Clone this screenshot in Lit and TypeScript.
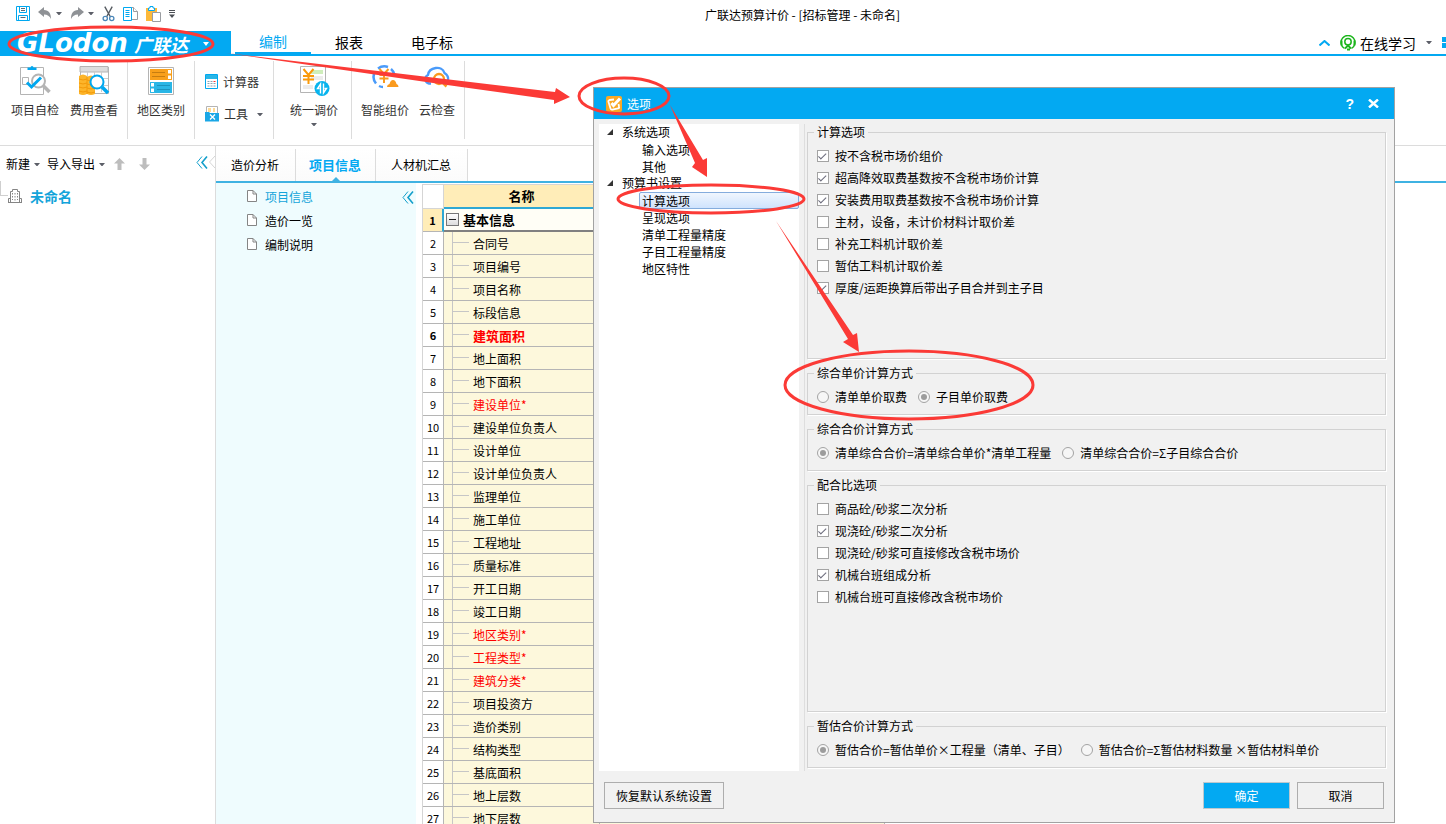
import { LitElement, html, css, svg, nothing } from "lit";
import { customElement, state } from "lit/decorators.js";
import { classMap } from "lit/directives/class-map.js";

const base = css`
  *, *::before, *::after { box-sizing: border-box; }
  button { font: inherit; color: inherit; background: none; border: 0; padding: 0; margin: 0; }
  svg { display: block; flex: none; }
`;

const caret = html`<svg width="6" height="3" viewBox="0 0 6 3"><path d="M0 0h6L3 3.500z" fill="#5c5f68"/></svg>`;

const icons = {
  save: html`<svg width="14" height="15" viewBox="0 0 14 15" fill="none" stroke="#00a8f0"><path d="M.5.5h13v14H.5z"/><path d="M3.500.5v6h7v-6M2.500 14.500v-5h9v5"/><path d="M5 2.500h4M5 4.500h4M4.500 11.500h5" stroke="#5b6a75"/></svg>`,
  undo: html`<svg width="14" height="14" viewBox="0 0 14 14"><path d="M0 5 6 0v3c5 0 7 3.500 7 9-1.500-3-3.500-4.500-7-4.500V10z" fill="#8f9296"/></svg>`,
  redo: html`<svg width="14" height="14" viewBox="0 0 14 14"><path d="M14 5 8 0v3C3 3 1 6.500 1 12c1.500-3 3.500-4.500 7-4.500V10z" fill="#8f9296"/></svg>`,
  cut: html`<svg width="13" height="16" viewBox="0 0 14 16" fill="none"><path d="M3 0l6 11M11 0 5 11" stroke="#555a60" stroke-width="1.500"/><circle cx="3.500" cy="12.800" r="2.300" stroke="#4a86b8" stroke-width="1.400"/><circle cx="10.500" cy="12.800" r="2.300" stroke="#4a86b8" stroke-width="1.400"/></svg>`,
  copy: html`<svg width="15" height="15" viewBox="0 0 15 15" fill="#fff"><path d="M5.500 1.500h5l4 4v8h-9z" stroke="#9a9da1"/><path d="M10.500 1.500v4h4" stroke="#9a9da1"/><path d="M.5 1.500h8v13h-8z" stroke="#00a8f0"/><path d="M2.500 4.500h4M2.500 6.500h4M2.500 8.500h4M2.500 10.500h4" stroke="#00a8f0"/></svg>`,
  paste: html`<svg width="15" height="16" viewBox="0 0 15 16"><path d="M0 2h11v13H0z" fill="#fdb93a"/><path d="M2.500 2h1.500V.5h3V2h1.500v2.500h-6z" fill="#fff" stroke="#00a8f0"/><path d="M6.500 6.500h8v9h-8z" fill="#fff" stroke="#9a9da1"/></svg>`,
  more: html`<svg width="6" height="8" viewBox="0 0 6 8"><path d="M0 0h6v1H0zM0 2h6v1H0zM0 4.500h6L3 8z" fill="#4b4f55"/></svg>`,
  check: html`<svg width="32" height="32" viewBox="0 0 32 32" fill="none"><path d="M1.500 2.500h23v27h-23z" stroke="#b4b4b4"/><path d="M8.500 5V2.500h3a1.500 1.500 0 0 1 3 0h3V5z" fill="#00a8f0"/><path d="M3.500 12.500h6v7h-6z" stroke="#b4b4b4"/><circle cx="19.500" cy="16" r="6.500" fill="#fff" stroke="#b4b4b4" stroke-width="2"/><path d="M8 17.500l4.500 4.500L22 12.500" stroke="#00a8f0" stroke-width="3"/><path d="M24 20.500l6.500 6.500" stroke="#b4b4b4" stroke-width="3.500"/></svg>`,
  fee: html`<svg width="32" height="32" viewBox="0 0 32 32" fill="none"><path d="M2.500 2v26M2.500 28.500h28V2" stroke="#b4b4b4"/><path d="M2 1.500h28V7H2z" fill="#ddd" stroke="#b4b4b4"/><path d="M9.500 7v20M16.500 7v20M23.500 7v20M3 13.500h27M3 20.500h27" stroke="#ccc"/><path d="M1 11q4-3 8 0v1q4-3 8 0v17q-4 2-8 0-4 2-8 0z" fill="#fdb52a"/><path d="M1 14q4 2 8 0M1 18q4 2 8 0M1 22q4 2 8 0M1 26q4 2 8 0M9 15q4 2 8 0M9 19q4 2 8 0M9 23q4 2 8 0M9 27q4 2 8 0M9 12v17" stroke="#f39a0a"/><circle cx="19" cy="17" r="6.500" fill="#fff" stroke="#00a8f0" stroke-width="2"/><path d="M24 22l6 6" stroke="#00a8f0" stroke-width="3.500"/></svg>`,
  region: html`<svg width="32" height="32" viewBox="0 0 32 32" fill="none"><path d="M3.500 2.500h25v27h-25z" stroke="#b4b4b4"/><path d="M5 4h22v11H5z" fill="#f9a01b"/><path d="M7 7.500h13M7 11.500h13" stroke="#c77d10"/><path d="M22.500 4.500h4v4.500h-4zM22.500 10h4v4.500h-4z" fill="#fff" stroke="#f9a01b"/><path d="M5 17h22v11H5z" fill="#29b6e6"/><path d="M12 20.500h13M12 24.500h13" stroke="#1a94c0"/><path d="M5.500 17.500h4v4.500h-4zM5.500 23h4v4.500h-4z" fill="#fff" stroke="#29b6e6"/></svg>`,
  calc: html`<svg width="13" height="16" viewBox="0 0 13 16"><path d="M.5.5h12v14H.5z" fill="#fff" stroke="#00a8f0"/><path d="M1 1h11v4H1z" fill="#29b6e6"/><path d="M2.500 7.500h2M5.500 7.500h2M2.500 9.500h2M5.500 9.500h2M2.500 12h2M5.500 12h2M8.500 12h2M8.500 9.500h2" stroke="#8aa5b5"/><path d="M8.500 7.500h2" stroke="#f33"/></svg>`,
  tools: html`<svg width="14" height="16" viewBox="0 0 14 16"><path d="M1.500.5h11v8h-11z" fill="#fff" stroke="#b4b4b4"/><path d="M3 3h3M3 5h3M8 3h2M8 5h2" stroke="#fdb52a"/><path d="M0 6h4l1 1h9v8.500H0z" fill="#1aa7e6"/><path d="M5 8.500l5 5M10 8.500l-5 5" stroke="#fff" stroke-width="1.300"/></svg>`,
  adjust: html`<svg width="32" height="32" viewBox="0 0 32 32" fill="none"><path d="M2.500 1.500h25v26h-25z" fill="#fff" stroke="#b4b4b4"/><path d="M13 5h12v4H13z" fill="#cfeebb"/><path d="M13 11h12v4H13zM5 20h10v4H5zM17 20h8v4h-8z" fill="#ececec"/><path d="M5.500 4l5 6 5-6M10.500 10v9M5 11h11M5 14.500h11" stroke="#fa9a0a" stroke-width="2"/><circle cx="24" cy="23.500" r="7.500" fill="#08b4ee"/><path d="M22.500 28.500V19l-3 4.500h2M25.500 18.500V28l3-4.500h-2" stroke="#fff" stroke-width="1.400"/></svg>`,
  smart: html`<svg width="32" height="32" viewBox="0 0 32 32" fill="none"><path d="M7 18.500A11 11 0 0 1 6 6.500M9 3.500a11 11 0 0 1 10-1.500M22 4q3 2.500 3.500 6M10 21q2 1 4 1" stroke="#4a9bfa" stroke-width="2.500"/><path d="M10.500 4l4.500 5 4.500-5M15 9v9M10.500 10h9M10.500 13.500h9" stroke="#fa9a1e" stroke-width="2"/><path d="M18 22q0-2.500 2.500-3Q21.500 15 24 15t3.500 4q2 .5 2 3z" fill="#fa9a1e"/></svg>`,
  cloud: html`<svg width="32" height="32" viewBox="0 0 32 32" fill="none"><path d="M10 18.500H8a4.500 4.500 0 0 1-1-8.500C8 2 21 0 23.500 8Q28 11 27 15.500" stroke="#4a9bfa" stroke-width="2.300"/><circle cx="18" cy="14" r="5" stroke="#fa9a1e" stroke-width="2.300"/><path d="M21.500 17.500l4 4" stroke="#fa9a1e" stroke-width="2.500"/></svg>`,
  headset: html`<svg width="16" height="16" viewBox="0 0 16 16" fill="none" stroke="#1cb51c"><path d="M4.500 13.500A7 7 0 1 1 11.500 13.500" stroke-width="1.400"/><path d="M1.500 5.500v5M14.500 5.500v5" stroke-width="2"/><circle cx="8" cy="6.800" r="3.200" stroke-width="1.500"/><path d="M5 13.500l3-3 3 3M7 14.500h3" stroke-width="1.800"/></svg>`,
  building: html`<svg width="14" height="14" viewBox="0 0 14 14" fill="none" stroke="#858585"><path d="M2.500 13V2.500h2v-2h5v2h2V13M0 13.500h14M.5 13V9.500h2M13.500 13V9.500h-2"/><path d="M4.500 4v7M7 4v9M9.500 4v7" stroke-dasharray="1.500 1.500"/></svg>`,
  page: html`<svg width="10" height="12" viewBox="0 0 10 12" fill="#fff" stroke="#858585"><path d="M.5.5H6L9.500 4v7.500h-9z"/><path d="M6 .5V4h3.500" fill="none"/></svg>`,
  collapse: html`<svg width="12" height="13" viewBox="0 0 12 13" fill="none" stroke="#139fcb"><path d="M6 .5l-5 6 5 6"/><path d="M11 .5l-5 6 5 6" stroke-width="1.600"/></svg>`,
  notch: html`<svg width="6" height="12" viewBox="0 0 6 12" fill="#fff" stroke="#d5d5d5"><path d="M6 0 .5 6 6 12"/></svg>`,
  up: html`<svg width="11" height="12" viewBox="0 0 11 12"><path d="M5.500 0 11 5.500H7.500V12h-4V5.500H0z" fill="#bdbdbd"/></svg>`,
  down: html`<svg width="11" height="12" viewBox="0 0 11 12"><path d="M5.500 12 11 6.500H7.500V0h-4v6.500H0z" fill="#bdbdbd"/></svg>`,
  edit: html`<svg width="16" height="16" viewBox="0 0 16 16" fill="none"><rect width="16" height="16" rx="2" fill="#f9a825"/><path d="M8 3.500L3.500 4Q2 4.500 2.500 6l2 6.500q.5 1.500 2 1l5.500-1q1.500-.5 1-2L12.500 8" stroke="#fff" stroke-width="1.800"/><path d="M5.500 7l2 2.500L14 2.500" stroke="#fff" stroke-width="3"/></svg>`,
};

@customElement("ribbon-bar")
class RibbonBar extends LitElement {
  static styles = [base, css`
    :host { display: block; }
    .ribbon { display: flex; height: 90px; padding: 5px 0 6px; border-bottom: 1px solid #dcdcdc; }
    .group { display: flex; gap: 10px; padding: 0 9px; border-right: 1px solid #dcdcdc; }
    .group.first { padding-left: 11px; gap: 11px; }
    .group.wide { padding: 0 13px 0 16px; }
    .tool { display: flex; flex-direction: column; align-items: center; justify-content: flex-start; padding-top: 4px; gap: 5px; line-height: 16px; color: #333; }
    .stack { display: flex; flex-direction: column; gap: 16px; padding: 13px 1px 0; }
    .small { display: flex; align-items: center; gap: 5px; line-height: 16px; color: #333; }
    .small svg:last-child:not(:first-child) { margin-left: 4px; }
  `];
  render() {
    return html`<div class="ribbon">
      <div class="group first">
        <button class="tool">${icons.check}<span>项目自检</span></button>
        <button class="tool">${icons.fee}<span>费用查看</span></button>
      </div>
      <div class="group"><button class="tool">${icons.region}<span>地区类别</span></button></div>
      <div class="group"><div class="stack">
        <button class="small">${icons.calc}<span>计算器</span></button>
        <button class="small">${icons.tools}<span>工具</span>${caret}</button>
      </div></div>
      <div class="group wide"><button class="tool">${icons.adjust}<span>统一调价</span>${caret}</button></div>
      <div class="group">
        <button class="tool">${icons.smart}<span>智能组价</span></button>
        <button class="tool">${icons.cloud}<span>云检查</span></button>
      </div>
    </div>`;
  }
}

type Row = [string, string?];
const rows: Row[] = [
  ["合同号"], ["项目编号"], ["项目名称"], ["标段信息"], ["建筑面积", "red bold"], ["地上面积"], ["地下面积"],
  ["建设单位*", "red"], ["建设单位负责人"], ["设计单位"], ["设计单位负责人"], ["监理单位"], ["施工单位"],
  ["工程地址"], ["质量标准"], ["开工日期"], ["竣工日期"], ["地区类别*", "red"], ["工程类型*", "red"],
  ["建筑分类*", "red"], ["项目投资方"], ["造价类别"], ["结构类型"], ["基底面积"], ["地上层数"], ["地下层数"],
];

@customElement("info-table")
class InfoTable extends LitElement {
  static styles = [base, css`
    :host { display: block; }
    table { border-collapse: separate; border-spacing: 0; table-layout: fixed; width: 463px; border-left: 1px solid #d5d5d5; margin-top: 1px; }
    .c-num { width: 21px; }
    .c-name { width: 156px; }
    th, td { padding: 0; height: 23px; line-height: 16px; border-bottom: 1px solid #b5b5b5; border-right: 1px solid #b5b5b5; text-align: left; }
    thead th { height: 25px; background: #ffedb8; border-top: 1px solid #d5d5d5; border-bottom: 2px solid #2fa8d4; text-align: center; font-size: 13px; }
    thead th:first-child { background: #fff; border-bottom: 1px solid #d5d5d5; border-right-color: #d5d5d5; }
    tbody th { font-weight: 400; text-align: center; font-size: 11px; background: #fff; }
    td { background: #fdf8dc; }
    .name { display: flex; align-items: stretch; height: 22px; padding-left: 8px; }
    .branch { width: 21px; border-left: 1px solid #c6c6c6; }
    .branch::before { content: ""; display: block; width: 16px; height: 11px; border-bottom: 1px solid #c6c6c6; }
    .label { line-height: 24px; }
    .red { color: #f00; }
    .bold { font-weight: 700; }
    .label.bold { font-size: 13px; }
    .root th { background: #ffedb8; font-weight: 700; border-right: 2px solid #2fa8d4; }
    .root td { background: #fffef6; border-bottom: 2px solid #808080; font-weight: 700; font-size: 13px; }
    .root .name { align-items: center; height: 21px; padding-left: 2px; gap: 4px; }
    .toggle { width: 13px; height: 13px; border: 1px solid #777; background: linear-gradient(#fff, #ddd); display: grid; place-items: center; }
    .toggle::before { content: ""; width: 7px; height: 1px; background: #222; }
  `];
  render() {
    return html`<table>
      <colgroup><col class="c-num"><col class="c-name"><col></colgroup>
      <thead><tr><th></th><th>名称</th><th></th></tr></thead>
      <tbody>
        <tr class="root"><th>1</th><td><div class="name"><button class="toggle" aria-label="折叠"></button><span>基本信息</span></div></td><td></td></tr>
        ${rows.map(([name, style], i) => html`<tr>
          <th class=${style?.includes("bold") ? "bold" : nothing}>${i + 2}</th>
          <td><div class="name"><span class="branch"></span><span class="label ${style ?? ""}">${name}</span></div></td><td></td>
        </tr>`)}
      </tbody>
    </table>`;
  }
}

type Choice = { label: string; on?: boolean };
type Section = { title: string; kind: "checkbox" | "radio"; size?: string; items: Choice[] };
const sections: Section[] = [
  { title: "计算选项", kind: "checkbox", size: "tall", items: [
    { label: "按不含税市场价组价", on: true }, { label: "超高降效取费基数按不含税市场价计算", on: true },
    { label: "安装费用取费基数按不含税市场价计算", on: true }, { label: "主材，设备，未计价材料计取价差" },
    { label: "补充工料机计取价差" }, { label: "暂估工料机计取价差" }, { label: "厚度/运距换算后带出子目合并到主子目", on: true } ] },
  { title: "综合单价计算方式", kind: "radio", items: [{ label: "清单单价取费" }, { label: "子目单价取费", on: true }] },
  { title: "综合合价计算方式", kind: "radio", items: [{ label: "清单综合合价=清单综合单价*清单工程量", on: true }, { label: "清单综合合价=Σ子目综合合价" }] },
  { title: "配合比选项", kind: "checkbox", size: "tall", items: [
    { label: "商品砼/砂浆二次分析" }, { label: "现浇砼/砂浆二次分析", on: true }, { label: "现浇砼/砂浆可直接修改含税市场价" },
    { label: "机械台班组成分析", on: true }, { label: "机械台班可直接修改含税市场价" } ] },
  { title: "暂估合价计算方式", kind: "radio", items: [{ label: "暂估合价=暂估单价×工程量（清单、子目）", on: true }, { label: "暂估合价=Σ暂估材料数量 ×暂估材料单价" }] },
];
const tree = [
  { title: "系统选项", items: ["输入选项", "其他"] },
  { title: "预算书设置", items: ["计算选项", "呈现选项", "清单工程量精度", "子目工程量精度", "地区特性"] },
];

@customElement("options-dialog")
class OptionsDialog extends LitElement {
  static styles = [base, css`
    :host { display: flex; flex-direction: column; background: #f1f1f1; border: 1px solid #a2a2a2; }
    header { display: flex; align-items: center; height: 31px; padding: 0 15px 0 12px; background: #03a9f2; color: #fff; }
    header h2 { margin: 0 0 0 5px; flex: 1; font-size: 12px; font-weight: 400; }
    .win { display: flex; align-items: center; gap: 14px; font: 700 14px "Liberation Sans", sans-serif; }
    .body { flex: 1; display: flex; min-height: 0; padding: 5px 8px 0 5px; }
    .tree { width: 200px; background: #fff; line-height: 16px; }
    .tree ul { list-style: none; margin: 0; padding: 0; }
    .parent { display: flex; align-items: center; gap: 9px; height: 17px; padding: 0 0 1px 8px; }
    .leaf { display: block; width: 160px; height: 17px; margin-left: 40px; padding-left: 2px; border: 1px solid transparent; line-height: 14px; text-align: left; }
    .leaf.on { border-color: #84acdd; border-radius: 2px; background: linear-gradient(#f0f6fe, #cfe3fd); }
    .form { flex: 1; display: flex; flex-direction: column; gap: 6px; margin-left: 5px; padding: 0 0 3px 2px; border-left: 1px solid #dedede; }
    fieldset { margin: 0; min-width: 0; height: 50px; padding: 5px 0 0 9px; border: 1px solid #d2d2d2; box-shadow: 1px 1px 0 #fff; line-height: 16px; }
    fieldset.tall { height: auto; flex: 1; }
    legend { padding: 0 3px; margin-left: -3px; }
    .choices { display: flex; flex-direction: column; align-items: flex-start; }
    .choices.radio { flex-direction: row; gap: 11px; }
    label { display: flex; align-items: center; gap: 6px; height: 22px; white-space: nowrap; }
    input { appearance: none; width: 12px; height: 12px; margin: 0; border: 1px solid #a3a3a3; background: #fff; flex: none; display: grid; place-items: center; }
    input[type="checkbox"]:checked::before { content: ""; width: 8px; height: 4px; border: solid #6b6b7b; border-width: 0 0 1px 1px; transform: rotate(-45deg) translate(0, -1px); }
    input[type="radio"] { border-radius: 50%; background: #f6f6f6; }
    input[type="radio"]:checked::before { content: ""; width: 6px; height: 6px; border-radius: 50%; background: #9c9c9c; }
    footer { display: flex; gap: 7px; padding: 11px 10px 13px; }
    footer button { width: 87px; height: 27px; border: 1px solid #adadad; }
    footer .reset { width: 120px; margin-right: auto; }
    footer .ok { background: #03a9f2; color: #fff; border-color: #bcc8ce; }
  `];
  @state() private current = "计算选项";
  render() {
    return html`
      <header>${icons.edit}<h2>选项</h2>
        <div class="win"><button>?</button>
        <button aria-label="关闭"><svg width="11" height="9" viewBox="0 0 11 9"><path d="M1 .5l9 8M10 .5l-9 8" stroke="#fff" stroke-width="2.400"/></svg></button></div>
      </header>
      <div class="body">
        <nav class="tree">${tree.map((g) => html`
          <div class="parent"><svg width="6" height="6" viewBox="0 0 6 6"><path d="M6 0v6H0z" fill="#333"/></svg><span>${g.title}</span></div>
          <ul>${g.items.map((t) => html`<li><button class=${classMap({ leaf: true, on: t === this.current })} @click=${() => (this.current = t)}>${t}</button></li>`)}</ul>`)}
        </nav>
        <form class="form">${sections.map((s, i) => html`
          <fieldset class=${s.size ?? nothing}><legend>${s.title}</legend>
            <div class="choices ${s.kind}">${s.items.map((c) => html`
              <label><input type=${s.kind} name="s${i}" .checked=${!!c.on} ?checked=${!!c.on}><span>${c.label}</span></label>`)}
            </div>
          </fieldset>`)}
        </form>
      </div>
      <footer><button class="reset">恢复默认系统设置</button><button class="ok">确定</button><button>取消</button></footer>`;
  }
}

const rings = [[111, 44, 102, 17], [624, 96, 45, 18], [711, 199, 93, 14], [909, 385, 124, 34]];
const arrows = [
  "M226 53 555 92 556 88 570 97 554 104 554 100 440 84z",
  "M670 105 703 160 707 158 707 177 692 167 695 163z",
  "M776 221 853 335 857 333 859 352 843 342 848 339z",
];

@customElement("app-root")
class AppRoot extends LitElement {
  static styles = [base, css`
    :host { display: flex; flex-direction: column; position: relative; height: 100vh; overflow: hidden; background: #fff; color: #000; font: 12px/16px "Noto Sans CJK SC", "Noto Sans", sans-serif; }
    .title { display: flex; align-items: center; height: 31px; padding: 0 0 4px 16px; }
    .quick { display: flex; align-items: center; gap: 8px; }
    .quick button { display: flex; align-items: center; gap: 4px; }
    .title h1 { flex: 1; margin: 2px 16px 0 0; text-align: center; font-size: 12px; font-weight: 400; }
    .menu { display: flex; height: 25px; }
    .brand { display: flex; align-items: center; width: 231px; padding-left: 17px; background: #03a9f2; color: #fff; font-style: italic; font-weight: 700; }
    .latin { width: 117px; font: italic 700 26px/25px "DejaVu Sans", sans-serif; }
    .cjk { font-size: 18px; line-height: 24px; }
    .brand svg { margin-left: 15px; }
    .tabs { flex: 1; display: flex; padding-left: 4px; border-bottom: 2px solid #03a9f2; font-size: 14px; min-width: 0; overflow: hidden; }
    .tab { padding: 0 24px; line-height: 21px; }
    .tab.on { color: #03a9f2; border-bottom: 2px solid #03a9f2; }
    .online { display: flex; align-items: center; gap: 10px; margin-left: auto; }
    .learn { display: flex; align-items: center; gap: 4px; }
    .work { flex: 1; display: flex; min-height: 0; }
    .side { width: 216px; border-right: 1px solid #dcdcdc; }
    .bar { display: flex; align-items: center; height: 36px; padding-left: 6px; gap: 7px; }
    .bar button { display: flex; align-items: center; gap: 4px; }
    .bar .arrows { display: flex; gap: 14px; margin-left: 2px; }
    .fold { display: flex; align-items: center; margin-left: auto; }
    .bar .fold { gap: 1px; height: 32px; align-self: flex-start; }
    .root { display: flex; align-items: center; gap: 8px; height: 27px; color: #14a4da; font-size: 14px; font-weight: 700; }
    .stem { width: 8px; height: 15px; margin: 0 -8px 14px 0; border: solid #cfcfcf; border-width: 0 0 1px 1px; }
    .main { flex: 1; display: flex; flex-direction: column; min-width: 0; }
    .views { display: flex; height: 37px; padding-top: 3px; border-bottom: 2px solid #3fb2e2; }
    .view { padding: 0 16px 0 15px; border-right: 1px solid #dcdcdc; background: linear-gradient(#fff, #fbfbfb); }
    .view.on { position: relative; padding: 0 14px 0 13px; color: #03a9f2; font-size: 13px; font-weight: 700; }
    .view.on::after { content: ""; position: absolute; left: 50%; bottom: 0; margin-left: -4px; border: 4px solid transparent; border-top: 0; border-bottom-color: #3fb2e2; }
    .content { flex: 1; display: flex; min-height: 0; }
    .nav { display: flex; width: 200px; padding: 2px 2px 0 31px; background: #effcfe; align-items: flex-start; }
    .nav ul { list-style: none; margin: 0; padding: 0; }
    .nav a { display: flex; align-items: center; gap: 8px; height: 24px; color: #000; text-decoration: none; }
    .nav a svg { margin-bottom: 3px; }
    .nav a.on { color: #14a4da; }
    .nav .fold { height: 25px; }
    .table { flex: 1; min-width: 0; padding-left: 6px; overflow: hidden; }
    .dialog { position: absolute; left: 593px; top: 87px; width: 802px; height: 736px; }
    .marks { position: absolute; inset: 0; width: 100%; height: 100%; pointer-events: none; }
  `];
  render() {
    return html`
      <div class="title">
        <div class="quick">
          <button aria-label="保存">${icons.save}</button>
          <button aria-label="撤销">${icons.undo}${caret}</button>
          <button aria-label="重做">${icons.redo}${caret}</button>
          <button aria-label="剪切">${icons.cut}</button>
          <button aria-label="复制">${icons.copy}</button>
          <button aria-label="粘贴">${icons.paste}</button>
          <button aria-label="更多">${icons.more}</button>
        </div>
        <h1>广联达预算计价 - [招标管理 - 未命名]</h1>
      </div>
      <div class="menu">
        <div class="brand"><span class="latin">GLodon</span><span class="cjk">广联达</span><svg width="6" height="4" viewBox="0 0 6 4"><path d="M0 0h6L3 4z" fill="#fff"/></svg></div>
        <div class="tabs">
          <button class="tab on">编制</button><button class="tab">报表</button><button class="tab">电子标</button>
          <div class="online">
            <svg width="11" height="6" viewBox="0 0 11 6"><path d="M.5 5.500l5-4.500 5 4.500" fill="none" stroke="#03a9f2" stroke-width="2"/></svg>
            <button class="learn">${icons.headset}<span>在线学习</span></button>${caret}
            <svg width="4" height="11" viewBox="0 0 4 11"><path d="M0 0h4v5H0zM0 6h4v5H0z" fill="#03a9f2"/></svg>
          </div>
        </div>
      </div>
      <ribbon-bar></ribbon-bar>
      <div class="work">
        <div class="side">
          <div class="bar">
            <button>新建${caret}</button><button>导入导出${caret}</button>
            <div class="arrows"><button aria-label="上移">${icons.up}</button><button aria-label="下移">${icons.down}</button></div>
            <button class="fold" aria-label="收起">${icons.collapse}${icons.notch}</button>
          </div>
          <div class="root"><span class="stem"></span>${icons.building}<span>未命名</span></div>
        </div>
        <div class="main">
          <div class="views"><button class="view">造价分析</button><button class="view on">项目信息</button><button class="view">人材机汇总</button></div>
          <div class="content">
            <div class="nav">
              <ul>${["项目信息", "造价一览", "编制说明"].map((t, i) => html`<li><a href="#" class=${i ? nothing : "on"}>${icons.page}<span>${t}</span></a></li>`)}</ul>
              <button class="fold" aria-label="收起">${icons.collapse}</button>
            </div>
            <div class="table"><info-table></info-table></div>
          </div>
        </div>
      </div>
      <options-dialog class="dialog"></options-dialog>
      <svg class="marks">
        ${rings.map(([x, y, rx, ry]) => svg`<ellipse cx=${x} cy=${y} rx=${rx} ry=${ry} fill="none" stroke="#fb3a36" stroke-width="3"/>`)}
        ${arrows.map((d) => svg`<path d=${d} fill="#fb3a36"/>`)}
      </svg>`;
  }
}
